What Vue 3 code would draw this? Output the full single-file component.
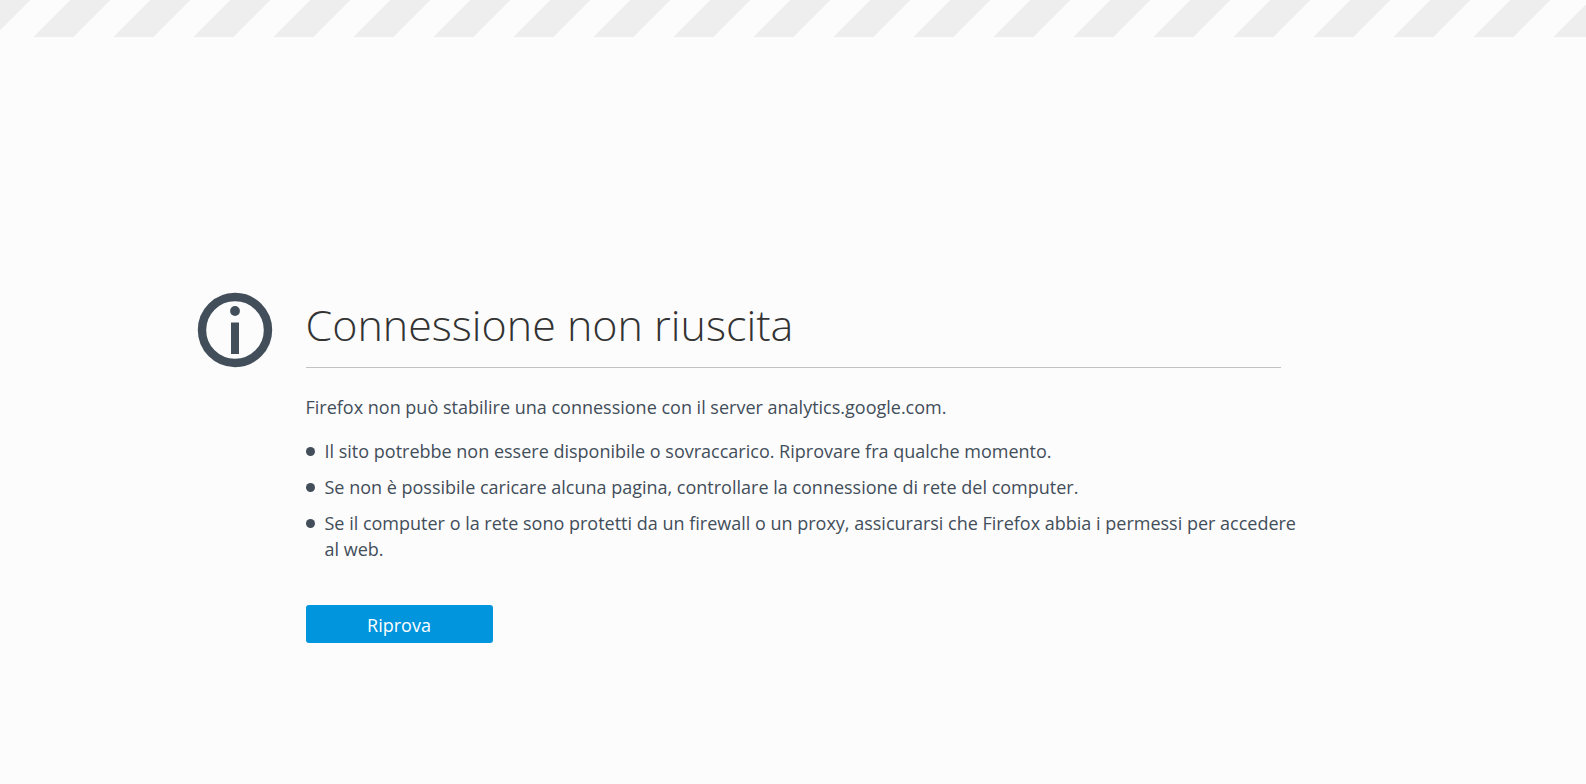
<script setup>
const reasons = [
  'Il sito potrebbe non essere disponibile o sovraccarico. Riprovare fra qualche momento.',
  'Se non è possibile caricare alcuna pagina, controllare la connessione di rete del computer.',
  'Se il computer o la rete sono protetti da un firewall o un proxy, assicurarsi che Firefox abbia i permessi per accedere al web.',
]

function retry() {
  window.location.reload()
}
</script>

<template>
  <div class="page">
    <div class="stripes" aria-hidden="true"></div>
    <main class="content">
      <svg class="info" viewBox="0 0 76 76" aria-hidden="true">
        <circle cx="38" cy="38" r="33" fill="none" stroke="#424f5a" stroke-width="8.4" />
        <circle cx="38" cy="19" r="4.9" fill="#424f5a" />
        <rect x="34" y="30.5" width="8" height="31.5" fill="#424f5a" />
      </svg>
      <div class="message">
        <h1>Connessione non riuscita</h1>
        <p>Firefox non può stabilire una connessione con il server analytics.google.com.</p>
        <ul>
          <li v-for="reason in reasons" :key="reason">{{ reason }}</li>
        </ul>
        <button type="button" @click="retry">Riprova</button>
      </div>
    </main>
  </div>
</template>

<style>
body {
  margin: 0;
  background: #fcfcfc;
}
</style>

<style scoped>
.page {
  display: flex;
  flex-direction: column;
  min-height: 100vh;
  background: #fcfcfc;
  color: #424e5a;
  font-family: "Open Sans", "Noto Sans", sans-serif;
  font-size: 18px;
  line-height: 26px;
}

.stripes {
  height: 37px;
  background-image: linear-gradient(
    135deg,
    #eeeeee 19%,
    #fcfcfc 19% 44%,
    #eeeeee 44% 69%,
    #fcfcfc 69% 94%,
    #eeeeee 94%
  );
  background-size: 80px 80px;
}

.content {
  flex: 1;
  display: grid;
  grid-template-columns: 109px minmax(0, 975px) 109px;
  justify-content: center;
  align-content: center;
  padding-top: 113px;
}

.info {
  width: 76px;
  height: 76px;
}

h1 {
  margin: 0 0 26px;
  padding: 0 0 9px;
  border-bottom: 1px solid #c1c1c1;
  color: #333333;
  font-size: 43px;
  font-weight: 300;
  line-height: 66px;
}

p {
  margin: 0 0 18px;
}

ul {
  display: flex;
  flex-direction: column;
  gap: 10px;
  margin: 0 -16px 43px 0;
  padding: 0;
  list-style: none;
}

li {
  display: flex;
  gap: 10px;
}

li::before {
  content: "";
  flex: none;
  width: 9px;
  height: 9px;
  margin-top: 9px;
  border-radius: 50%;
  background: #424e5a;
}

button {
  display: block;
  min-width: 187px;
  height: 38px;
  padding: 2px 16px 0;
  border: 0;
  border-radius: 3px;
  background: #0095dd;
  color: #ffffff;
  font: inherit;
  cursor: pointer;
}
</style>
